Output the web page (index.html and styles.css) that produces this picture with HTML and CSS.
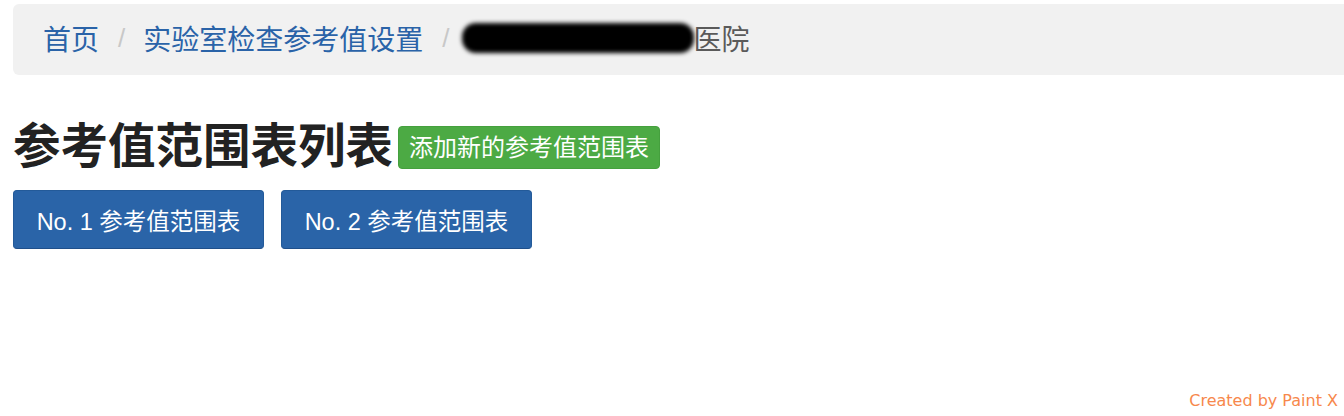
FILE: index.html
```html
<!DOCTYPE html>
<html lang="zh-CN">
<head>
<meta charset="utf-8">
<title>参考值范围表列表</title>
<link rel="stylesheet" href="styles.css">
</head>
<body>
<div class="page">
  <ol class="breadcrumb">
    <li><a href="#">首页</a></li>
    <li class="sep">/</li>
    <li><a href="#">实验室检查参考值设置</a></li>
    <li class="sep">/</li>
    <li class="active"><span class="redact"></span>医院</li>
  </ol>
  <div class="title-row">
    <h1 class="title">参考值范围表列表</h1>
    <a class="label-add" href="#">添加新的参考值范围表</a>
  </div>
  <div class="btn-row">
    <a class="btn" href="#">No. 1 参考值范围表</a>
    <a class="btn" href="#">No. 2 参考值范围表</a>
  </div>
</div>
<div class="credit">Created by Paint X</div>
</body>
</html>
```

FILE: styles.css
```css
html, body {
  margin: 0;
  padding: 0;
  overflow: hidden;
  background: #fff;
}
body {
  font-family: "Liberation Sans", "Noto Sans CJK SC", sans-serif;
  color: #222;
  width: 1344px;
  height: 416px;
  position: relative;
}
.page {
  padding: 4px 0 0 13px;
}
.breadcrumb {
  list-style: none;
  margin: 0 -20px 0 0;
  padding: 0 30px 3px;
  height: 71px;
  box-sizing: border-box;
  background: #f1f1f1;
  border-radius: 6px;
  display: flex;
  align-items: center;
  font-size: 28px;
}
.breadcrumb li {
  display: flex;
  align-items: center;
}
.breadcrumb a {
  color: #2a63a8;
  text-decoration: none;
}
.breadcrumb .sep {
  color: #c8c8c8;
  padding: 0 18px 0 19px;
  font-size: 26px;
}
.breadcrumb .active {
  color: #5a5a5a;
}
.redact {
  display: inline-block;
  width: 232px;
  height: 30px;
  background: #000;
  border-radius: 14px;
  filter: blur(2px);
  margin-right: 0;
  margin-left: -6px;
}
.title-row {
  display: flex;
  align-items: center;
  margin-top: 44px;
}
.title {
  margin: 0;
  font-size: 47.5px;
  line-height: 56px;
  font-weight: bold;
  color: #222;
}
.label-add {
  margin-left: 5px;
  margin-top: 1px;
  display: inline-block;
  background: #4caa44;
  border: 1px solid #45a03e;
  color: #fff;
  font-size: 24px;
  line-height: 41px;
  padding: 0 10px;
  border-radius: 4px;
  text-decoration: none;
}
.btn-row {
  display: flex;
  gap: 17px;
  margin-top: 15px;
}
.btn {
  display: inline-flex;
  align-items: center;
  justify-content: center;
  width: 251px;
  height: 59px;
  box-sizing: border-box;
  background: #2a64a8;
  border: 1px solid #235a99;
  border-bottom-color: #1f4f8a;
  border-radius: 4px;
  color: #fff;
  font-size: 23.5px;
  text-decoration: none;
}
.credit {
  position: absolute;
  right: 6px;
  bottom: 6px;
  color: #f7884c;
  font-family: "DejaVu Sans", sans-serif;
  font-size: 16px;
}
```
